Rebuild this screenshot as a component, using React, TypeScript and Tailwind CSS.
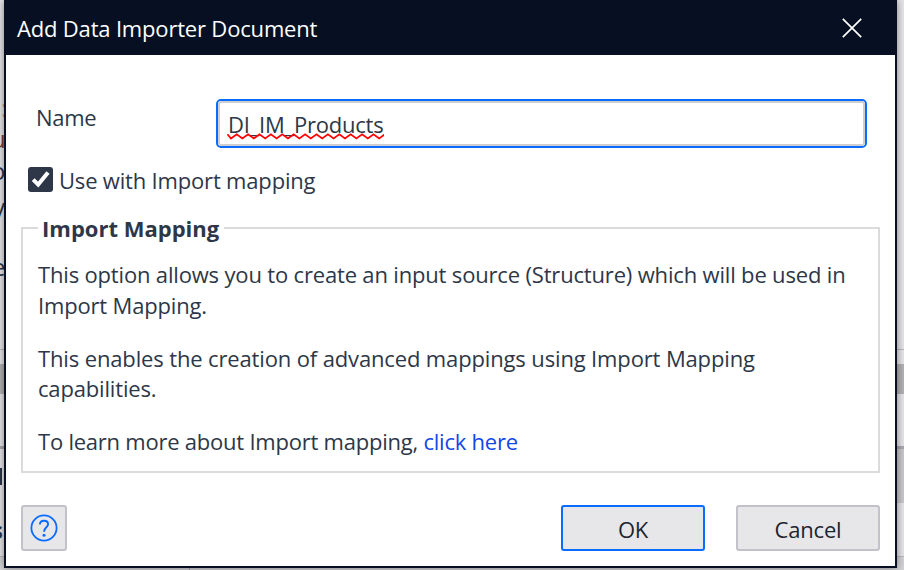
import React from "react";

function Backdrop() {
  return (
    <div className="absolute inset-0 flex flex-col bg-[#e5e4e6] text-[24px] leading-[32px] text-[#2c3448]">
      <div className="flex h-[349px] flex-col overflow-hidden pt-[92px]">
        <div className="ml-px h-[31px] text-[#c79a88]">:</div>
        <div className="-ml-[9px] h-[32px] text-[#7b3a30]">u</div>
        <div className="-ml-[9px] h-[36px]">o</div>
        <div className="-ml-[7px] h-[60px]">y</div>
        <div className="-ml-[8px] h-[32px]">e</div>
      </div>
      <div className="h-px bg-[#b9b8bc]" />
      <div className="h-[14px]" />
      <div className="h-[30px] bg-[#b3b2b3]" />
      <div className="h-[52px]" />
      <div className="h-[3px] bg-[#aaa8b0]" />
      <div className="flex h-[107px] justify-between">
        <div className="flex w-[10px] flex-col overflow-hidden pt-[19px]">
          <div className="h-[17px] w-[2px] bg-[#2c3448]" />
          <div className="-ml-[9px] mt-[29px] font-bold">s</div>
        </div>
        <div className="h-[54px] w-[8px] bg-[#c8c7c9]" />
      </div>
      <div className="h-px bg-[#b9b8bc]" />
      <div className="flex flex-1 bg-[#d3d2d4]">
        <div className="w-[190px] border-r border-[#aaa8b0]" />
      </div>
    </div>
  );
}

function CheckMark() {
  return (
    <svg viewBox="0 0 25 25" className="size-[25px]" fill="none">
      <path d="M5.2 12.6 L10.2 17.6 L20 5.4" stroke="#fff" strokeWidth="4" />
    </svg>
  );
}

function HelpIcon() {
  return (
    <svg viewBox="0 0 28 28" className="size-[28px]" fill="none" stroke="#0a6cff" strokeWidth="1.8">
      <circle cx="14" cy="14" r="12.6" />
      <path d="M9.9 10.6 C9.9 8.2 11.6 6.8 14 6.8 C16.5 6.8 18.1 8.3 18.1 10.3 C18.1 13.2 14 13.6 14 17.8" strokeWidth="1.9" />
      <circle cx="14" cy="21.2" r="1.5" fill="#0a6cff" stroke="none" />
    </svg>
  );
}

function Squiggle() {
  return (
    <svg className="absolute -left-px top-[24px] h-[7px] w-[157px]" viewBox="0 0 157 7" fill="none">
      <path
        d={"M0.5 1.2 L4 5.5" + Array.from({ length: 14 }, (_, i) => ` L${4 + i * 11.4 + 5.7} 1.2 L${4 + (i + 1) * 11.4} 5.5`).join("")}
        stroke="#f00"
        strokeWidth="1.7"
      />
    </svg>
  );
}

export default function App() {
  return (
    <div className="relative h-[570px] w-[904px] overflow-hidden font-['Open_Sans',sans-serif] text-[22px] text-[#2d3748]">
      <Backdrop />
      <div className="relative ml-[4px] flex h-[568px] w-[893px] flex-col border-2 border-t-0 border-[#061022] bg-white shadow-[0_0_8px_rgba(0,0,0,0.45)]">
        <header className="flex h-[55px] shrink-0 items-center justify-between bg-[#061022] pl-[11px] pr-[33px] text-white">
          <span className="whitespace-nowrap pt-px tracking-[-0.18px]">Add Data Importer Document</span>
          <svg className="size-[20px]" viewBox="0 0 20 20" stroke="#fff" strokeWidth="1.7">
            <path d="M0.8 0.8 L19.2 19.2 M19.2 0.8 L0.8 19.2" />
          </svg>
        </header>
        <div className="flex flex-col px-[15px] pt-[44px]">
          <div className="flex h-[49px] pl-[15px]">
            <label className="w-[180px] pt-[3px] leading-[30px] tracking-[-0.3px]">Name</label>
            <div className="flex w-[651px] rounded-[5px] border-2 border-[#0a6cff]">
              <div className="flex-1 rounded-[3px] border-2 border-[#cfced1] pl-[8px] pt-[5px]">
                <span className="relative inline-block whitespace-nowrap leading-[30px] tracking-[-0.22px]">
                  DI_IM_Products
                  <Squiggle />
                </span>
              </div>
            </div>
          </div>
          <div className="mt-[19px] flex h-[25px] items-center pl-[7px]">
            <span className="size-[25px] rounded-[3px] bg-[#2d3748]">
              <CheckMark />
            </span>
            <span className="whitespace-nowrap pl-[6px] pt-px tracking-[-0.18px]">Use with Import mapping</span>
          </div>
          <fieldset className="mt-[21px] h-[260px] border-2 border-[#dbdbdc] pl-[15px]">
            <legend className="h-[30px] whitespace-nowrap pl-[4px] pr-[5px] font-bold leading-[31px]">Import Mapping</legend>
            <div className="flex flex-col gap-[22.5px] whitespace-nowrap pt-[16px] leading-[30.5px] tracking-[-0.17px]">
              <p>
                This option allows you to create an input source (Structure) which will be used in
                <br />
                Import Mapping.
              </p>
              <p>
                <span className="tracking-[-0.14px]">This enables the creation of advanced mappings using Import Mapping</span>
                <br />
                capabilities.
              </p>
              <p className="tracking-[-0.23px]">
                To learn more about Import mapping, <a className="text-[#0f47e6]">click here</a>
              </p>
            </div>
          </fieldset>
          <footer className="mt-[32px] flex h-[46px] leading-none tracking-[-0.18px] text-[#1c2430]">
            <button className="flex w-[46px] items-center justify-center rounded-[3px] border-2 border-[#c3c2ca] bg-[#e7e7e9]">
              <HelpIcon />
            </button>
            <button className="ml-auto w-[144px] rounded-[3px] border-2 border-[#0a6cff] bg-[#e7e7e9] pt-px">OK</button>
            <button className="ml-[31px] w-[144px] rounded-[3px] border-2 border-[#c3c2ca] bg-[#e7e7e9] pt-px">Cancel</button>
          </footer>
        </div>
      </div>
    </div>
  );
}
